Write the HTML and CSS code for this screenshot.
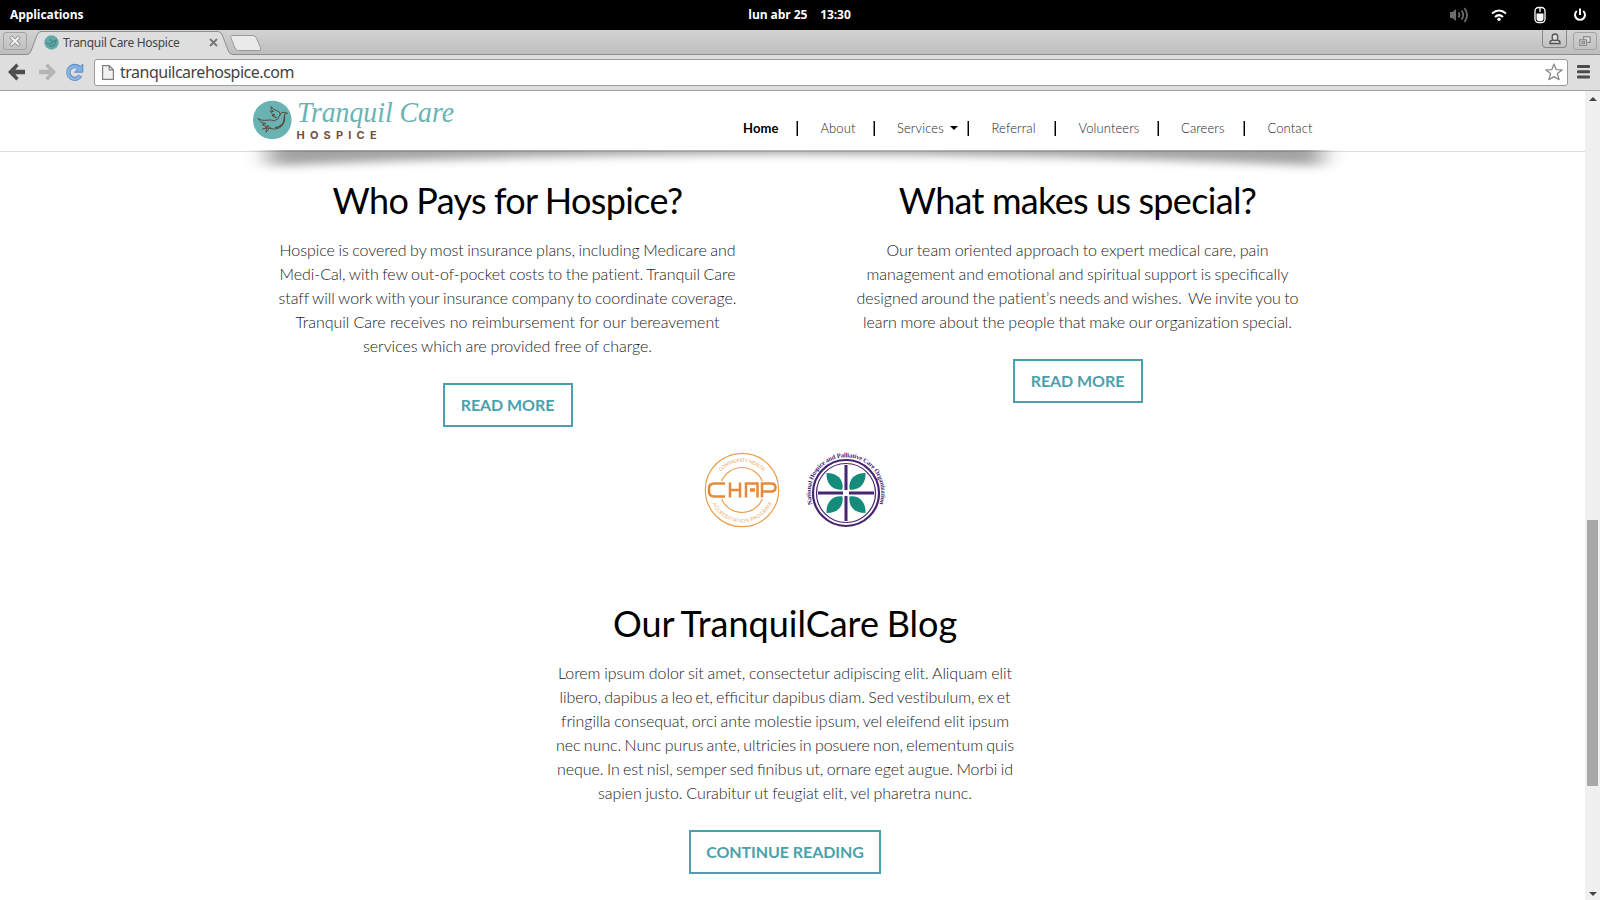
FILE: index.html
```html
<!DOCTYPE html>
<html lang="en">
<head>
<meta charset="utf-8">
<title>Tranquil Care Hospice</title>
<link rel="stylesheet" href="styles.css">
</head>
<body>
<div class="panel">
  <span class="panel-apps">Applications</span>
  <span class="panel-clock"><span>lun abr 25</span><span>13:30</span></span>
  <span class="panel-tray">
    <svg width="20" height="18" viewBox="0 0 20 18" fill="none" stroke="#6b6b6b" stroke-width="1.800"><path d="M1 6h2.500L7 3v12l-3.500-3H1z" fill="#6b6b6b" stroke="none"/><path d="M9.500 6.500q2 2.500 0 5M12.500 4.500q3.500 4.500 0 9M15.500 2q5 7 0 14"/></svg>
    <svg class="wifi" width="16" height="14" viewBox="0 0 16 14" fill="none" stroke="#fff" stroke-width="2"><path d="M1 5.500Q8-.5 15 5.500M4 9q4-3.800 8 0"/><circle cx="8" cy="11.300" r="1.700" fill="#fff" stroke="none"/></svg>
    <svg class="mouse" width="12" height="18" viewBox="0 0 12 18"><rect x="1" y="1.500" width="10" height="15" rx="3.500" fill="#000" stroke="#fff" stroke-width="1.300"/><path d="M6 1v5" stroke="#fff" stroke-width="1.300"/><path d="M2.500 7.500h7v5q0 2.500-2.500 2.500H5q-2.500 0-2.500-2.500z" fill="#fff"/></svg>
    <svg class="power" width="14" height="14" viewBox="0 0 14 14" fill="none" stroke="#fff" stroke-width="2"><path d="M3.800 3a5 5 0 1 0 6.400 0M7 .5v6.500"/></svg>
  </span>
</div>

<div class="tabstrip">
  <svg class="tab-shape" width="270" height="25" viewBox="0 0 270 25"><path d="M-1 24.500h27c3 0 4-1 5-3.500l6-16q1.500-3.500 4-3.500H218q3 0 4.300 3.500l6 16q1.300 3.500 4.700 3.500H271V26H-1z" fill="#dedede" stroke="#8e8e8e"/><path d="M231.500 5.500H253q2.500 0 3.500 2.500l4 9.500q1 3-1.500 3H238.500q-2.500 0-3.500-2.500L231 8q-1-2.500.5-2.500z" fill="#eaeaea" stroke="#999"/></svg>
  <span class="frame-btn close"><svg width="12" height="12" viewBox="0 0 12 12"><path d="M1.500 1.500l9 9M10.500 1.500l-9 9" stroke="#888" stroke-width="3.600"/><path d="M2 2l8 8M10 2l-8 8" stroke="#f4f4f4" stroke-width="2"/></svg></span>
  <span class="tab-title">
    <svg width="15" height="15" viewBox="0 0 15 15"><circle cx="7.500" cy="7.500" r="7.200" fill="#62aaa9"/><path d="M2 8q3 2 6 0l4-3q0 7-7 6M6 4q1 3 4 2" fill="none" stroke="#4a8584" stroke-width="1.200"/></svg>
    <span>Tranquil Care Hospice</span>
    <svg class="tab-x" width="9" height="9" viewBox="0 0 9 9"><path d="M1 1l7 7M8 1L1 8" stroke="#777" stroke-width="1.800"/></svg>
  </span>
  <span class="frame-btn user"><svg width="12" height="12" viewBox="0 0 12 12" fill="#ddd" stroke="#555" stroke-width="1.300"><path d="M1 10.500V9.500Q1 7.500 4 7 3 5.500 3.200 3.500 3.500 1 6 1t2.800 2.500Q9 5.500 8 7q3 .5 3 2.500v1z"/><path d="M4 7q2 1 4 0" fill="none"/></svg></span>
  <span class="frame-btn restore"><svg width="12" height="11" viewBox="0 0 12 11" fill="#ddd" stroke="#888" stroke-width="1.200"><rect x="4.600" y=".8" width="6.600" height="5.600"/><rect x=".8" y="3.800" width="6.600" height="5.600"/><rect x="3" y="5.600" width="2.400" height="2"/></svg></span>
</div>

<div class="toolbar">
  <svg width="17" height="18" viewBox="0 0 17 18"><path d="M8.300.5L0 9l8.300 8.500 2.400-2.500-3.500-3.700H17V6.700H7.200L10.700 3z" fill="#4d4d4d"/></svg>
  <svg class="fwd" width="17" height="18" viewBox="0 0 17 18"><path d="M8.700.5L17 9l-8.300 8.500L6.300 15l3.500-3.700H0V6.700h9.800L6.300 3z" fill="#b5b5b5"/></svg>
  <svg class="reload" width="19" height="19" viewBox="0 0 19 19"><path d="M15.300 12.500A6.400 6.400 0 1 1 14 4.700" fill="none" stroke="#5b8cc4" stroke-width="4.400"/><path d="M17.800 1v8.200H9.500z" fill="#82afe0" stroke="#5b8cc4"/><path d="M15 12.700A6.300 6.300 0 1 1 13.800 5l1.500 1.500" fill="none" stroke="#88b4e3" stroke-width="2.800"/></svg>
  <div class="omnibox">
    <svg width="12" height="15" viewBox="0 0 12 15"><path d="M.6.6h6.600l4.200 4.200v9.600H.6zM7.200.6v4.200h4.200" fill="#f2f2f2" stroke="#808080" stroke-width="1.200"/></svg>
    <span class="url">tranquilcarehospice.com</span>
    <svg class="star" width="18" height="18" viewBox="0 0 18 18"><path d="M9 1l2.100 5.600 6 .3-4.700 3.700 1.700 6L9 13.600l-5.100 3 1.700-6L.9 6.900l6-.3z" fill="#fff" stroke="#8a8a8a" stroke-width="1.300" stroke-linejoin="round"/></svg>
  </div>
  <svg class="menu" width="13" height="14" viewBox="0 0 13 14" fill="#4c4c4c"><rect width="13" height="3" rx="1"/><rect y="5.200" width="13" height="3" rx="1"/><rect y="10.400" width="13" height="3" rx="1"/></svg>
</div>

<div class="viewport">
  <div class="page">
    <header class="site-header">
      <svg class="logo" width="210" height="48" viewBox="0 0 210 48">
        <circle cx="22.300" cy="24" r="19.300" fill="#69b3b3"/>
        <path d="M8 22.500q3.500 2.500 8 1.800 5-1 8.500.5 4-1 5.500-6 1.500-3.500 4-2.500l3.500 1-3 1q1 10-5 13.500-5 2.500-10 .5l-3.500 4 .5-4.500-4.500 1.500M8 22.500q3 5.500 8 5l-4 1q3 2.500 7 1.500l-4 2q4 1 6-1" fill="none" stroke="#5d4a3c" stroke-width="1" stroke-linejoin="round"/>
        <path d="M21 10.500q2 3.500 5.500 4t4 4.500M21 10.500q-.5 3.500 2.500 5l-3.500-.5q2 4 5 4l-3 .5q2 2 5 2" fill="none" stroke="#5d4a3c" stroke-width="1"/>
        <path d="M34.500 20.500q.5 10-9.500 11.500" fill="none" stroke="#5d4a3c" stroke-width="1.500"/>
        <text class="logo-name" x="47" y="26" textLength="157" lengthAdjust="spacingAndGlyphs">Tranquil Care</text>
        <text class="logo-sub" x="46.500" y="43">HOSPICE</text>
      </svg>
      <nav class="nav">
        <a class="n1 active">Home</a><a class="n2">About</a><a class="n3"><span>Services</span><i class="caret"></i></a><a class="n4">Referral</a><a class="n5">Volunteers</a><a class="n6">Careers</a><a class="n7">Contact</a>
      </nav>
      <svg class="shadow" width="1130" height="34" viewBox="0 0 1130 34">
        <defs><filter id="soft" x="-5%" y="-100%" width="110%" height="300%"><feGaussianBlur stdDeviation="12 5"/></filter></defs>
        <path d="M38-20H1092V16Q565-8 38 16z" fill="#000" opacity=".36" filter="url(#soft)"/>
      </svg>
    </header>

    <main>
      <div class="columns">
        <section class="block">
          <h2 class="tight">Who Pays for Hospice?</h2>
          <p class="copy-pays"><span>Hospice is covered by most insurance plans, including Medicare and</span><span>Medi-Cal, with few out-of-pocket costs to the patient. Tranquil Care</span><span>staff will work with your insurance company to coordinate coverage.</span><span>Tranquil Care receives no reimbursement for our bereavement</span><span>services which are provided free of charge.</span></p>
          <a class="button">READ MORE</a>
        </section>
        <section class="block">
          <h2 class="tight">What makes us special?</h2>
          <p class="copy-special"><span>Our team oriented approach to expert medical care, pain</span><span>management and emotional and spiritual support is <b>specifically</b></span><span>designed around the patient’s needs and wishes.&nbsp; We invite you to</span><span>learn more about the people that make our organization special.</span></p>
          <a class="button">READ MORE</a>
        </section>
      </div>
      <div class="badges">
        <svg width="78" height="78" viewBox="0 0 78 78">
          <defs><path id="chapTop" d="M11 39a28 28 0 0 1 56 0"/><path id="chapBottom" d="M6.500 39a32.500 32.500 0 0 0 65 0"/></defs>
          <g fill="none" stroke="#e9a04c"><circle cx="39" cy="39" r="36.700" stroke-width="1.200"/><path d="M18.700 30a22 22 0 0 1 40.600 0M18.700 48a22 22 0 0 0 40.600 0" stroke-width="1.200"/>
          <path d="M22 32.500H11.500q-5.500 0-5.500 5v3q0 5 5.500 5H22M27 31.500v15M37 31.500v15M27 39h10M43 46.500v-14h11.500v14M59 46.500v-14h9q4.500 0 4.500 4t-4.500 4h-9" stroke="#e5893b" stroke-width="2.500"/><path d="M47 39h5" stroke="#e5893b" stroke-width="3.500"/></g>
          <text class="chap-ring"><textPath href="#chapTop" startOffset="20" textLength="48">COMMUNITY HEALTH</textPath></text>
          <text class="chap-ring"><textPath href="#chapBottom" startOffset="14" textLength="74">ACCREDITATION PROGRAM</textPath></text>
        </svg>
        <svg class="nhpco" width="84" height="84" viewBox="0 0 84 84">
          <defs><path id="nhpco" d="M9 54A35.300 35.300 0 1 1 75 54"/></defs>
          <g fill="none" stroke="#46246f"><circle cx="42" cy="42" r="33" stroke-width="2.200"/><circle cx="42" cy="42" r="29.500" stroke-width="1.200"/><path d="M42 14v25M42 45v25M14 42h25M45 42h25" stroke-width="3"/></g>
          <g fill="#158c7b"><path d="M38.500 38.500C28 40 22 32 22.500 22 33 22 40 28 38.500 38.500z"/><path d="M45.500 38.500C56 40 62 32 61.500 22 51 22 44 28 45.500 38.500z"/><path d="M38.500 45.500C28 44 22 52 22.500 62 33 62 40 56 38.500 45.500z"/><path d="M45.500 45.500C56 44 62 52 61.500 62 51 62 44 56 45.500 45.500z"/></g>
          <text class="nhpco-ring"><textPath href="#nhpco" startOffset="1" textLength="134">National Hospice and Palliative Care Organization</textPath></text>
        </svg>
      </div>
      <section class="block blog">
        <h2>Our TranquilCare Blog</h2>
        <p class="copy-blog"><span>Lorem ipsum dolor sit amet, consectetur adipiscing elit. Aliquam elit</span><span>libero, dapibus a leo et, <b>efficitur</b> dapibus diam. Sed vestibulum, ex et</span><span>fringilla consequat, orci ante molestie ipsum, vel eleifend elit ipsum</span><span>nec nunc. Nunc purus ante, ultricies in posuere non, elementum quis</span><span>neque. In est nisl, semper sed <b>finibus</b> ut, ornare eget augue. Morbi id</span><span>sapien justo. Curabitur ut feugiat elit, vel pharetra nunc.</span></p>
        <a class="button wide">CONTINUE READING</a>
      </section>
    </main>
  </div>
  <div class="scrollbar">
    <i class="arrow up"></i><div class="thumb"></div><i class="arrow down"></i>
  </div>
</div>
</body>
</html>
```
FILE: styles.css
```css
* { box-sizing: border-box; }
html, body { margin: 0; height: 900px; overflow: hidden; }
body { display: flex; flex-direction: column; background: #fff; font-family: Lato, sans-serif; }
svg { display: block; flex: none; }

/* desktop panel */
.panel { height: 30px; flex: none; background: #000; color: #fff; display: grid; grid-template-columns: 1fr auto 1fr; align-items: center; padding: 0 13px 0 10px; font: bold 12px "Open Sans", sans-serif; letter-spacing: -.08px; }
.panel-apps, .panel-clock { padding-bottom: 1px; }
.panel-clock { display: flex; gap: 13px; padding-left: 2px; }
.panel-tray { display: flex; justify-content: flex-end; align-items: center; }
.wifi { margin-left: 22px; }
.mouse { margin-left: 27px; }
.power { margin-left: 27px; }

/* browser tabs */
.tabstrip { position: relative; height: 25px; flex: none; display: flex; background: linear-gradient(#d3d3d3, #bdbdbd); border-bottom: 1px solid #8e8e8e; }
.tab-shape { position: absolute; left: 0; top: 0; }
.frame-btn { position: relative; display: flex; align-items: center; justify-content: center; border: 1px solid #a3a3a3; border-radius: 3px; }
.close { width: 24px; height: 18px; margin: 2px 0 0 3px; }
.tab-title { position: relative; display: flex; align-items: center; height: 25px; width: 174px; margin-left: 17px; font: 12px "Noto Sans", sans-serif; letter-spacing: -.3px; color: #444; white-space: nowrap; }
.tab-title span { margin-left: 4px; }
.tab-title .tab-x { margin-left: auto; }
.user { width: 25px; height: 18px; margin-left: auto; border-color: #888; border-top: 0; border-radius: 0 0 4px 4px; }
.restore { width: 24px; height: 18px; margin: 2px 3px 0 6px; }

/* browser toolbar */
.toolbar { height: 36px; flex: none; display: flex; align-items: center; padding: 0 10px 1px 8px; background: #dedede; border-bottom: 1px solid #a3a3a3; }
.fwd { margin-left: 14px; }
.reload { margin-left: 9px; }
.omnibox { flex: 1; height: 27px; margin: 0 9px 0 10px; padding: 0 4px 0 7px; display: flex; align-items: center; background: #fff; border: 1px solid #9b9b9b; border-radius: 3px; }
.url { margin-left: 6px; font: 16px "Noto Sans", sans-serif; line-height: 24px; letter-spacing: -.5px; color: #444; }
.star { margin-left: auto; }

/* web page */
.viewport { flex: 1; display: flex; min-height: 0; }
.page { flex: 1; }
.site-header { position: relative; height: 61px; padding: 5px 0 0 250px; border-bottom: 1px solid #dedede; display: flex; }
.logo-name { font: italic 29px "Liberation Serif", serif; fill: #69b3b3; }
.logo-sub { font: bold 11px Inter, sans-serif; letter-spacing: 5.200px; fill: #6f5140; }
.nav { display: flex; margin: 24px 0 0 283px; height: 16px; font-size: 13px; line-height: 16px; font-weight: 300; color: #1c1c1c; }
.nav a { display: flex; align-items: center; white-space: nowrap; letter-spacing: .1px; }
.nav a:not(:last-child)::after { content: ""; width: 2px; height: 15px; margin: 0 22.500px 0 auto; background: linear-gradient(90deg, #888 50%, #000 50%); }
.nav .active { font-weight: 700; color: #000; }
.n1 { width: 77.500px; } .n2 { width: 76.500px; } .n3 { width: 94.500px; } .n4 { width: 87px; } .n5 { width: 102.500px; } .n6 { width: 86.500px; }
.caret { margin-left: 6px; border: 4px solid transparent; border-top-color: #000; border-bottom: 0; }
.shadow { position: absolute; left: 230px; top: 59px; overflow: hidden; }

main { display: flex; flex-direction: column; }
.columns { display: grid; grid-template-columns: 570px 570px; padding: 28px 0 0 222.500px; }
.block { display: flex; flex-direction: column; align-items: center; text-align: center; }
h2 { margin: 0; font-size: 36px; line-height: 40px; font-weight: 400; color: #000; white-space: nowrap; word-spacing: -1.500px; }
.tight { letter-spacing: -.66px; word-spacing: -.5px; }
p { margin: 18px 0 25px; display: flex; flex-direction: column; align-items: center; font-size: 16px; line-height: 24px; font-weight: 300; color: #1c1c1c; white-space: nowrap; letter-spacing: -.05px; word-spacing: -2px; font-variant-ligatures: none; }
/* each line is justified to its own measure */
p span { display: block; white-space: normal; text-align: justify; text-align-last: justify; height: 24px; }
p b { font-weight: inherit; letter-spacing: 0; font-variant-ligatures: common-ligatures; }
.copy-pays span:nth-child(1) { width: 456px; }
.copy-pays span:nth-child(2) { width: 456px; }
.copy-pays span:nth-child(3) { width: 458px; }
.copy-pays span:nth-child(4) { width: 424px; }
.copy-pays span:nth-child(5) { width: 289px; }
.copy-special span:nth-child(1) { width: 382px; }
.copy-special span:nth-child(2) { width: 422px; }
.copy-special span:nth-child(3) { width: 442px; }
.copy-special span:nth-child(4) { width: 429px; }
.copy-blog span:nth-child(1) { width: 454px; }
.copy-blog span:nth-child(2) { width: 451px; }
.copy-blog span:nth-child(3) { width: 448px; }
.copy-blog span:nth-child(4) { width: 458px; }
.copy-blog span:nth-child(5) { width: 456px; }
.copy-blog span:nth-child(6) { width: 374px; }
.button { width: 130px; height: 44px; border: 2px solid #4ba1ab; color: #4ba1ab; font-size: 16px; line-height: 40px; font-weight: 700; letter-spacing: -.06px; white-space: nowrap; }
.wide { width: 192px; }
.badges { display: flex; align-items: flex-start; gap: 23px; padding: 24px 0 0 703px; }
.chap-ring { font: 5px Lato, sans-serif; fill: #e5a763; }
.nhpco { overflow: visible; }
.nhpco-ring { font: bold 6.500px "Liberation Serif", serif; fill: #46246f; }
.blog { width: 570px; margin: 68px 0 0 500px; }

.scrollbar { width: 15px; flex: none; background: #f0f0f0; display: flex; flex-direction: column; align-items: center; padding: 6px 0 4px; }
.thumb { width: 11px; height: 266px; margin-top: 419px; background: #a8a8a8; }
.arrow { border: 4px solid transparent; }
.up { border-bottom-color: #444; border-top: 0; }
.down { margin-top: auto; border-top-color: #444; border-bottom: 0; }
```
